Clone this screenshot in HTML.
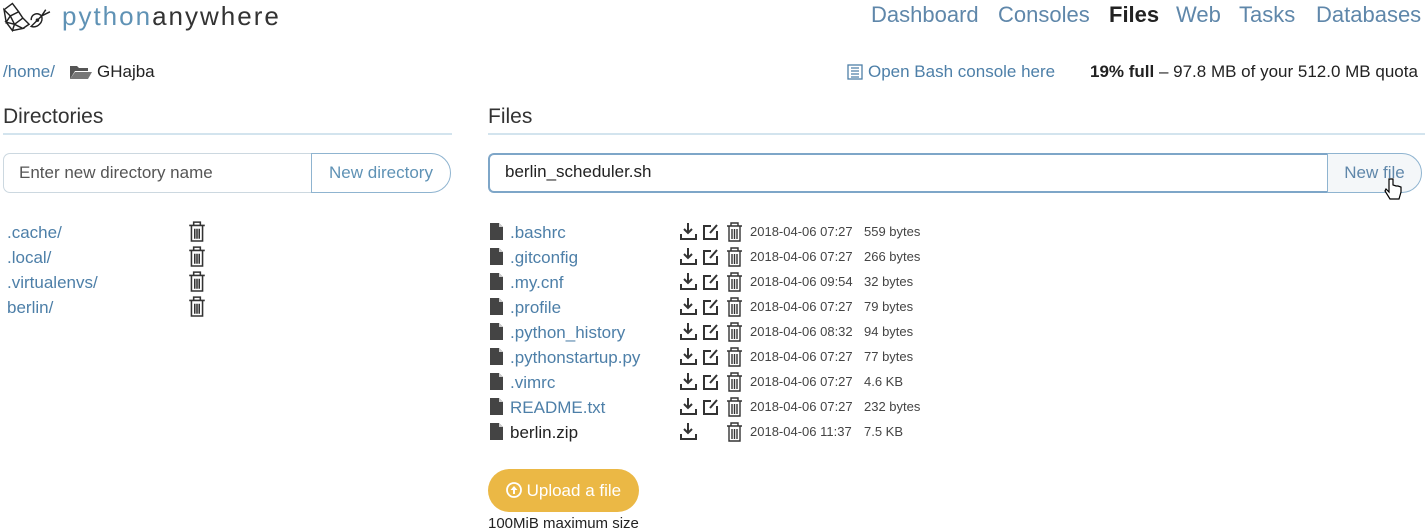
<!DOCTYPE html>
<html><head><meta charset="utf-8"><style>
body{margin:0;width:1425px;height:532px;background:#fff;font-family:"Liberation Sans",sans-serif;position:relative;overflow:hidden;color:#222}
.a{position:absolute;white-space:nowrap}
.blue{color:#4d7fa8}
.nav{font-size:22px;color:#5f87aa;top:2px}
.h{font-size:21px;color:#333}
.line{position:absolute;height:2px;background:#d3e4ee}
.row{position:absolute;height:22px;line-height:22px;font-size:17px}
.meta{font-size:13px;color:#444}
svg{position:absolute}
</style></head><body>
<svg style="left:2px;top:0px" width="50" height="34" viewBox="0 0 48 30" fill="none" stroke="#222" stroke-width="1.4"><path d="M2 8 L10 2 L16 10 L8 14 Z M2 8 L8 14 L4 20 Z M16 10 L20 16 L12 22 L8 14 M4 20 L12 22 L10 28 Z M12 22 L20 26 L10 28 M20 16 L26 22 L20 26"/><path d="M28 18 C28 12 34 10 38 14 L42 8 M38 14 L46 10 M38 14 C40 20 34 26 28 24 Z"/><circle cx="34" cy="18" r="1"/></svg>
<div class="a" style="left:62px;top:1px;font-size:26px;letter-spacing:2px"><span style="color:#5f92b5">python</span><span style="color:#333">anywhere</span></div>
<div class="a nav" style="left:871px">Dashboard</div>
<div class="a nav" style="left:998px">Consoles</div>
<div class="a nav" style="left:1109px;color:#222;font-weight:bold">Files</div>
<div class="a nav" style="left:1176px">Web</div>
<div class="a nav" style="left:1239px">Tasks</div>
<div class="a nav" style="left:1316px">Databases</div>

<div class="a" style="left:3px;top:62px;font-size:17px"><span class="blue">/home/</span></div>
<svg style="left:69px;top:64px" width="24" height="16" viewBox="0 0 24 16"><path d="M1 2h7l2 2h9v3H6L1 15Z" fill="#555"/><path d="M6 8h17l-4 7H1Z" fill="#777"/></svg>
<div class="a" style="left:97px;top:62px;font-size:17px">GHajba</div>

<svg style="left:847px;top:64px" width="16" height="16" viewBox="0 0 16 16" fill="none" stroke="#4d7fa8" stroke-width="1.3"><rect x="1" y="1" width="14" height="14"/><path d="M4 4h8M4 7h8M4 10h8M4 13h8"/></svg>
<div class="a blue" style="left:868px;top:62px;font-size:17px">Open Bash console here</div>
<div class="a" style="left:1090px;top:62px;font-size:17px"><b>19% full</b> – 97.8 MB of your 512.0 MB quota</div>

<div class="a h" style="left:3px;top:105px">Directories</div>
<div class="line" style="left:3px;top:133px;width:449px"></div>
<div class="a h" style="left:488px;top:105px">Files</div>
<div class="line" style="left:488px;top:133px;width:937px"></div>

<div class="a" style="left:3px;top:153px;width:307px;height:38px;border:1px solid #ccd8e0;border-right:none;border-radius:7px 0 0 7px"></div>
<div class="a" style="left:19px;top:163px;font-size:17px;color:#555">Enter new directory name</div>
<div class="a" style="left:311px;top:153px;width:138px;height:38px;border:1px solid #8fb4d0;border-radius:0 20px 20px 0;line-height:38px;text-align:center;font-size:17px;color:#5f92b5">New directory</div>

<div class="a" style="left:488px;top:153px;width:838px;height:36px;border:2px solid #7ea6c8;border-right:1px solid #9bb;border-radius:6px 0 0 6px"></div>
<div class="a" style="left:505px;top:162px;font-size:17px">berlin_scheduler.sh</div>
<div class="a" style="left:1327px;top:153px;width:93px;height:38px;border:1px solid #8fb4d0;border-radius:0 20px 20px 0;line-height:38px;text-align:center;font-size:17px;color:#5f87aa;background:#f4f7f9">New file</div>
<svg style="left:1384px;top:178px" width="18" height="24" viewBox="0 0 18 24"><path d="M5 1v13l-3-3-1 2 5 8h9l2-7v-5l-3-1-2 0-3-1V1Z" fill="#fff" stroke="#000" stroke-width="1.2"/></svg>

<div class="row blue" style="left:7px;top:222px">.cache/</div>
<div class="row blue" style="left:7px;top:247px">.local/</div>
<div class="row blue" style="left:7px;top:272px">.virtualenvs/</div>
<div class="row blue" style="left:7px;top:297px">berlin/</div>
<svg style="left:188px;top:221px" width="18" height="100" viewBox="0 0 16 90" fill="none" stroke="#333" stroke-width="1.4">
<g id="t"><path d="M1 4h14M5 4V1h6v3M3 4v14h10V4M6 7v9M8 7v9M10 7v9"/></g>
<use href="#t" y="22.5"/><use href="#t" y="45"/><use href="#t" y="67.5"/></svg>

<div class="row blue" style="left:510px;top:222px">.bashrc</div>
<div class="row blue" style="left:510px;top:247px">.gitconfig</div>
<div class="row blue" style="left:510px;top:272px">.my.cnf</div>
<div class="row blue" style="left:510px;top:297px">.profile</div>
<div class="row blue" style="left:510px;top:322px">.python_history</div>
<div class="row blue" style="left:510px;top:347px">.pythonstartup.py</div>
<div class="row blue" style="left:510px;top:372px">.vimrc</div>
<div class="row blue" style="left:510px;top:397px">README.txt</div>
<div class="row" style="left:510px;top:422px">berlin.zip</div>

<svg style="left:489px;top:222px" width="260" height="225" viewBox="0 0 260 225">
<defs>
<g id="f"><path d="M1 1h9l4 4v13H1Z" fill="#444"/><path d="M10 1v4h4" fill="#ccc"/></g>
<g id="dl" fill="none" stroke="#333" stroke-width="2"><path d="M8 1v10M4 7l4 4 4-4M1 12v5h15v-5"/></g>
<g id="ed" fill="none" stroke="#333" stroke-width="2"><path d="M9 4H2v13h13V9"/><path d="M8 11l7-8" /></g>
<g id="tr" fill="none" stroke="#333" stroke-width="1.4"><path d="M1 4h15M5 4V1h7v3M3 4v15h11V4M6 7v10M8.5 7v10M11 7v10"/></g>
<g id="r3"><use href="#f"/><use href="#dl" x="191"/><use href="#ed" x="213"/><use href="#tr" x="237"/></g>
</defs>
<use href="#r3" y="0"/><use href="#r3" y="25"/><use href="#r3" y="50"/><use href="#r3" y="75"/><use href="#r3" y="100"/><use href="#r3" y="125"/><use href="#r3" y="150"/><use href="#r3" y="175"/>
<use href="#f" y="200"/><use href="#dl" x="191" y="200"/><use href="#tr" x="237" y="200"/>
</svg>

<div class="row meta" style="left:750px;top:221px">2018-04-06 07:27</div><div class="row meta" style="left:864px;top:221px">559 bytes</div>
<div class="row meta" style="left:750px;top:246px">2018-04-06 07:27</div><div class="row meta" style="left:864px;top:246px">266 bytes</div>
<div class="row meta" style="left:750px;top:271px">2018-04-06 09:54</div><div class="row meta" style="left:864px;top:271px">32 bytes</div>
<div class="row meta" style="left:750px;top:296px">2018-04-06 07:27</div><div class="row meta" style="left:864px;top:296px">79 bytes</div>
<div class="row meta" style="left:750px;top:321px">2018-04-06 08:32</div><div class="row meta" style="left:864px;top:321px">94 bytes</div>
<div class="row meta" style="left:750px;top:346px">2018-04-06 07:27</div><div class="row meta" style="left:864px;top:346px">77 bytes</div>
<div class="row meta" style="left:750px;top:371px">2018-04-06 07:27</div><div class="row meta" style="left:864px;top:371px">4.6 KB</div>
<div class="row meta" style="left:750px;top:396px">2018-04-06 07:27</div><div class="row meta" style="left:864px;top:396px">232 bytes</div>
<div class="row meta" style="left:750px;top:421px">2018-04-06 11:37</div><div class="row meta" style="left:864px;top:421px">7.5 KB</div>

<div class="a" style="left:488px;top:469px;width:151px;height:43px;border-radius:22px;background:#ebb845;color:#fff;font-size:17px;line-height:43px;text-align:center">
<svg style="position:relative;display:inline-block;vertical-align:-2px" width="16" height="16" viewBox="0 0 16 16"><circle cx="8" cy="8" r="7" fill="none" stroke="#fff" stroke-width="1.8"/><path d="M8 4l-3.5 4H7v4h2V8h2.5Z" fill="#fff"/></svg> Upload a file</div>
<div class="a" style="left:488px;top:515px;font-size:15px;color:#222">100MiB maximum size</div>
</body></html>
